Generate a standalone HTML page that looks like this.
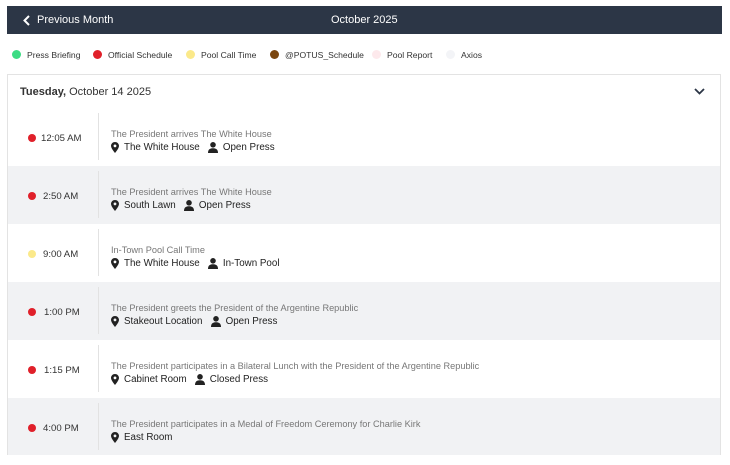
<!DOCTYPE html><html><head><style>
body{margin:0;width:730px;height:465px;background:#fff;font-family:"Liberation Sans",sans-serif;position:relative;overflow:hidden}
.hdr{position:absolute;left:7px;top:6px;width:715px;height:28px;background:#2c3646;color:#fff;font-size:11px}
.hdr .p{position:absolute;left:30px;top:8px}
.hdr .c{position:absolute;left:324px;top:8px}
.hdr svg{position:absolute;left:16px;top:9px}
.leg{position:absolute;top:50px;font-size:8.6px;color:#333}
.leg i{position:absolute;left:-15px;top:0px;width:9px;height:9px;border-radius:50%}
.card{position:absolute;left:7px;top:74px;width:714px;height:381px;border:1px solid #e3e3e3;box-sizing:border-box}
.dh{position:absolute;left:12px;top:11px;font-size:11px;color:#333}
.row{position:absolute;left:0;width:712px;height:58px}
.row.g{background:#f1f2f4}
.dot{position:absolute;left:20px;top:26px;width:8px;height:8px;border-radius:50%;background:#e0202a}
.tm{position:absolute;top:25px;font-size:9.6px;color:#333}
.div{position:absolute;left:90px;top:5px;width:1px;height:47px;background:#e2e2e2}
.t{position:absolute;left:103px;top:21px;font-size:9.2px;color:#777}
.d{position:absolute;left:103px;top:34px;font-size:9.8px;color:#222;display:flex;align-items:center}
.d svg{margin-right:5px}
</style></head><body>
<div class="hdr"><svg width="7" height="11" viewBox="0 0 7 11"><path d="M6 1L1.5 5.5L6 10" stroke="#fff" stroke-width="2" fill="none"/></svg><span class="p">Previous Month</span><span class="c">October 2025</span></div>
<span class="leg" style="left:27px"><i style="background:#3ddc84"></i>Press Briefing</span>
<span class="leg" style="left:108px"><i style="background:#e0202a"></i>Official Schedule</span>
<span class="leg" style="left:201px"><i style="background:#fbe98a"></i>Pool Call Time</span>
<span class="leg" style="left:285px"><i style="background:#7b4710"></i>@POTUS_Schedule</span>
<span class="leg" style="left:387px"><i style="background:#fde9ec"></i>Pool Report</span>
<span class="leg" style="left:461px"><i style="background:#f3f4f7"></i>Axios</span>
<div class="card">
<div class="dh"><b>Tuesday,</b> October 14 2025</div>
<svg style="position:absolute;left:686px;top:13px" width="11" height="7" viewBox="0 0 11 7"><path d="M1 1L5.5 5.5L10 1" stroke="#2c3646" stroke-width="1.8" fill="none"/></svg>
<div class="row" style="top:33px"><i class="dot"></i><span class="tm" style="left:33px">12:05 AM</span><i class="div"></i><span class="t">The President arrives The White House</span><span class="d"><svg width="8" height="11" viewBox="0 0 8 11"><path d="M4 0C1.8 0 0 1.7 0 3.9C0 6.5 4 11 4 11S8 6.5 8 3.9C8 1.7 6.2 0 4 0ZM4 5.3A1.4 1.4 0 1 1 4 2.5A1.4 1.4 0 0 1 4 5.3Z" fill="#222"/></svg>The White House&nbsp;&nbsp;&nbsp;<svg width="10" height="11" viewBox="0 0 10 11"><circle cx="5" cy="2.8" r="2.8" fill="#222"/><path d="M0 11C0 7.5 2 6.3 5 6.3S10 7.5 10 11Z" fill="#222"/></svg>Open Press</span></div>
<div class="row g" style="top:91px"><i class="dot"></i><span class="tm" style="left:35px">2:50 AM</span><i class="div"></i><span class="t">The President arrives The White House</span><span class="d"><svg width="8" height="11" viewBox="0 0 8 11"><path d="M4 0C1.8 0 0 1.7 0 3.9C0 6.5 4 11 4 11S8 6.5 8 3.9C8 1.7 6.2 0 4 0ZM4 5.3A1.4 1.4 0 1 1 4 2.5A1.4 1.4 0 0 1 4 5.3Z" fill="#222"/></svg>South Lawn&nbsp;&nbsp;&nbsp;<svg width="10" height="11" viewBox="0 0 10 11"><circle cx="5" cy="2.8" r="2.8" fill="#222"/><path d="M0 11C0 7.5 2 6.3 5 6.3S10 7.5 10 11Z" fill="#222"/></svg>Open Press</span></div>
<div class="row" style="top:149px"><i class="dot" style="background:#fbe98a"></i><span class="tm" style="left:35px">9:00 AM</span><i class="div"></i><span class="t">In-Town Pool Call Time</span><span class="d"><svg width="8" height="11" viewBox="0 0 8 11"><path d="M4 0C1.8 0 0 1.7 0 3.9C0 6.5 4 11 4 11S8 6.5 8 3.9C8 1.7 6.2 0 4 0ZM4 5.3A1.4 1.4 0 1 1 4 2.5A1.4 1.4 0 0 1 4 5.3Z" fill="#222"/></svg>The White House&nbsp;&nbsp;&nbsp;<svg width="10" height="11" viewBox="0 0 10 11"><circle cx="5" cy="2.8" r="2.8" fill="#222"/><path d="M0 11C0 7.5 2 6.3 5 6.3S10 7.5 10 11Z" fill="#222"/></svg>In-Town Pool</span></div>
<div class="row g" style="top:207px"><i class="dot"></i><span class="tm" style="left:36px">1:00 PM</span><i class="div"></i><span class="t">The President greets the President of the Argentine Republic</span><span class="d"><svg width="8" height="11" viewBox="0 0 8 11"><path d="M4 0C1.8 0 0 1.7 0 3.9C0 6.5 4 11 4 11S8 6.5 8 3.9C8 1.7 6.2 0 4 0ZM4 5.3A1.4 1.4 0 1 1 4 2.5A1.4 1.4 0 0 1 4 5.3Z" fill="#222"/></svg>Stakeout Location&nbsp;&nbsp;&nbsp;<svg width="10" height="11" viewBox="0 0 10 11"><circle cx="5" cy="2.8" r="2.8" fill="#222"/><path d="M0 11C0 7.5 2 6.3 5 6.3S10 7.5 10 11Z" fill="#222"/></svg>Open Press</span></div>
<div class="row" style="top:265px"><i class="dot"></i><span class="tm" style="left:36px">1:15 PM</span><i class="div"></i><span class="t">The President participates in a Bilateral Lunch with the President of the Argentine Republic</span><span class="d"><svg width="8" height="11" viewBox="0 0 8 11"><path d="M4 0C1.8 0 0 1.7 0 3.9C0 6.5 4 11 4 11S8 6.5 8 3.9C8 1.7 6.2 0 4 0ZM4 5.3A1.4 1.4 0 1 1 4 2.5A1.4 1.4 0 0 1 4 5.3Z" fill="#222"/></svg>Cabinet Room&nbsp;&nbsp;&nbsp;<svg width="10" height="11" viewBox="0 0 10 11"><circle cx="5" cy="2.8" r="2.8" fill="#222"/><path d="M0 11C0 7.5 2 6.3 5 6.3S10 7.5 10 11Z" fill="#222"/></svg>Closed Press</span></div>
<div class="row g" style="top:323px;height:57px"><i class="dot"></i><span class="tm" style="left:35px">4:00 PM</span><i class="div"></i><span class="t">The President participates in a Medal of Freedom Ceremony for Charlie Kirk</span><span class="d"><svg width="8" height="11" viewBox="0 0 8 11"><path d="M4 0C1.8 0 0 1.7 0 3.9C0 6.5 4 11 4 11S8 6.5 8 3.9C8 1.7 6.2 0 4 0ZM4 5.3A1.4 1.4 0 1 1 4 2.5A1.4 1.4 0 0 1 4 5.3Z" fill="#222"/></svg>East Room</span></div>
</div>
</body></html>
